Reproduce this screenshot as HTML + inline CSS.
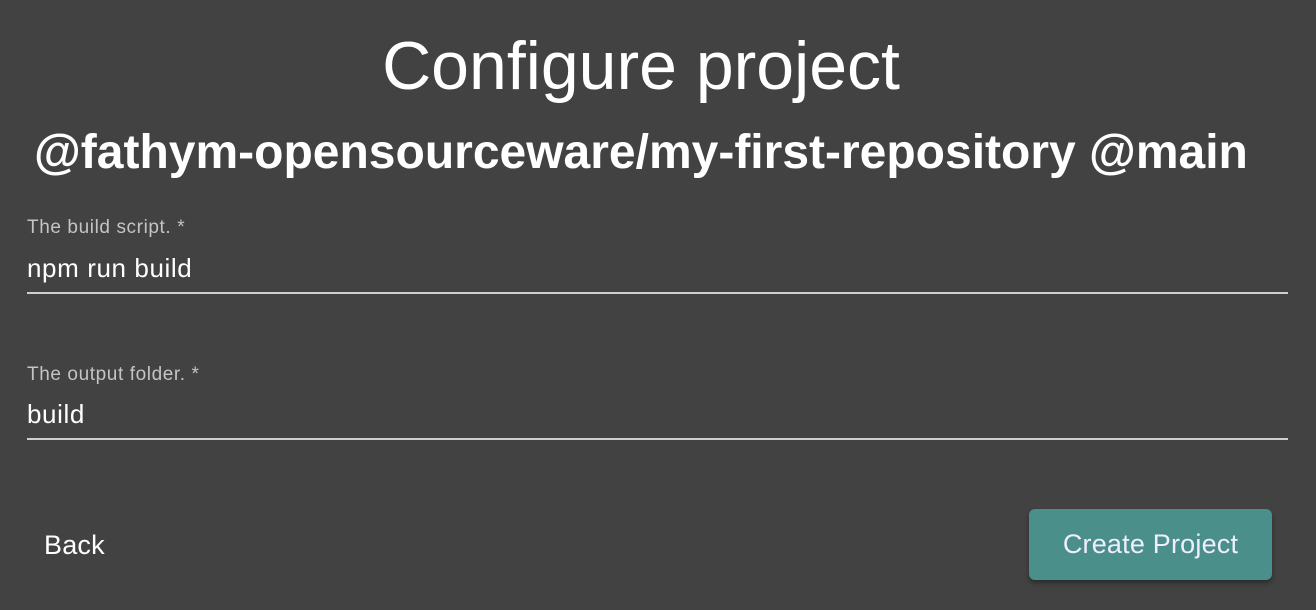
<!DOCTYPE html>
<html><head><style>
body{margin:0;width:1316px;height:610px;background:#424242;font-family:"Liberation Sans",sans-serif;color:#fff;position:relative;overflow:hidden}
div{position:absolute;white-space:nowrap}
.t{left:0;width:1282px;text-align:center;top:26px;font-size:68px;line-height:80px}
.s{left:34px;top:124px;font-size:48px;font-weight:bold;line-height:58px}
.l{left:27px;font-size:19px;letter-spacing:0.6px;color:#c4c4c4;line-height:20px}
.v{left:27px;font-size:26px;letter-spacing:0.6px;line-height:30px}
.u{left:27px;width:1261px;height:2px;background:#cfcfcf}
.btn{left:1029px;top:509px;width:243px;height:71px;background:#4a8f89;border-radius:6px;box-shadow:0 3px 5px rgba(0,0,0,.35);font-size:27px;letter-spacing:.2px;line-height:71px;text-align:center;color:#eef}
</style></head><body>
<div class="t">Configure project</div>
<div class="s">@fathym-opensourceware/my-first-repository @main</div>
<div class="l" style="top:218px">The build script. *</div>
<div class="v" style="top:253px">npm run build</div>
<div class="u" style="top:292px"></div>
<div class="l" style="top:365px">The output folder. *</div>
<div class="v" style="top:399px">build</div>
<div class="u" style="top:438px"></div>
<div style="left:44px;top:529px;font-size:27px;letter-spacing:.2px;line-height:32px">Back</div>
<div class="btn">Create Project</div>
</body></html>
